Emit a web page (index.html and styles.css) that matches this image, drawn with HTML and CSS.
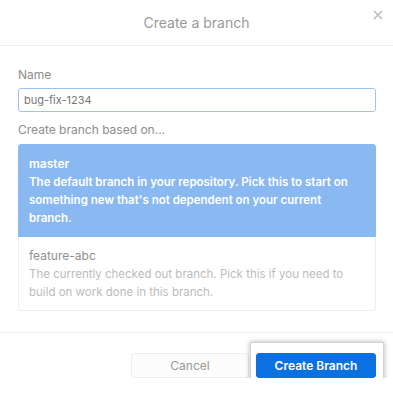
FILE: index.html
```html
<!DOCTYPE html>
<html lang="en">
<head>
  <meta charset="UTF-8">
  <meta name="viewport" content="width=device-width, initial-scale=1.0">
  <title>Create a branch</title>
  <link rel="stylesheet" href="styles.css">
</head>
<body>
  <div class="dialog">
    <header class="dialog-header">
      <h1>Create a branch</h1>
      <button class="close" aria-label="Close">
        <svg width="10" height="10" viewBox="0 0 10 10">
          <path d="M1 1L9 9M9 1L1 9" stroke="#b9bcc0" stroke-width="1.6" fill="none"/>
        </svg>
      </button>
    </header>

    <div class="dialog-body">
      <label class="field-label" for="branch-name">Name</label>
      <input class="text-input" id="branch-name" type="text" value="bug-fix-1234">

      <p class="field-label">Create branch based on...</p>
      <ul class="branch-list">
        <li class="branch selected">
          <div class="branch-name">master</div>
          <div class="branch-desc">The default branch in your repository. Pick this to start on something new that's not dependent on your current branch.</div>
        </li>
        <li class="branch">
          <div class="branch-name">feature-abc</div>
          <div class="branch-desc">The currently checked out branch. Pick this if you need to build on work done in this branch.</div>
        </li>
      </ul>
    </div>

    <footer class="dialog-footer">
      <button class="btn">Cancel</button>
      <div class="highlight">
        <button class="btn btn-primary">Create Branch</button>
      </div>
    </footer>
  </div>
</body>
</html>
```

FILE: styles.css
```css
body {
  margin: 0;
  background: #fff;
  font-family: Inter, "Noto Sans", sans-serif;
  color: #888;
}
.dialog {
  width: 393px;
}
.dialog-header {
  position: relative;
  height: 45px;
  border-bottom: 1px solid #ececec;
  display: flex;
  align-items: center;
  justify-content: center;
}
.dialog-header h1 {
  margin: 0;
  font-size: 14px;
  font-weight: 400;
  color: #999;
}
.close {
  position: absolute;
  top: 10px;
  right: 10px;
  border: none;
  background: none;
  padding: 0;
  width: 10px;
  height: 10px;
}
.close svg {
  display: block;
}
.dialog-body {
  padding: 21px 17px 0 18px;
}
.field-label {
  display: block;
  margin: 0;
  font-size: 12px;
  line-height: 16px;
  color: #8d8d8d;
}
.text-input {
  display: block;
  box-sizing: border-box;
  width: 100%;
  height: 24px;
  margin: 5px 0 10px;
  padding: 0 5px;
  border: 1px solid #9ec3f2;
  border-radius: 3px;
  font-family: inherit;
  font-size: 11px;
  color: #777;
  outline: none;
}
.branch-list {
  list-style: none;
  margin: 6px 0 0;
  padding: 0;
}
.branch {
  padding: 10px 10px 9px;
  border: 1px solid #eee;
  border-radius: 3px;
  font-size: 12px;
  line-height: 18px;
}
.branch .branch-name {
  color: #909090;
}
.branch .branch-desc {
  font-size: 11.5px;
  color: #bcbcbc;
}
.branch.selected {
  background: #8ab8f0;
  border-color: #8ab8f0;
  border-radius: 3px 3px 0 0;
}
.branch.selected .branch-name,
.branch.selected .branch-desc {
  color: #fff;
  font-weight: 600;
}
.branch + .branch {
  border-top: none;
  border-radius: 0 0 3px 3px;
}
.dialog-footer {
  margin-top: 21px;
  border-top: 1px solid #ececec;
  padding: 20px 17px 0 18px;
  display: flex;
  align-items: flex-start;
  justify-content: flex-end;
  gap: 1px;
}
.btn {
  width: 118px;
  height: 25px;
  border: 1px solid #eee;
  border-radius: 3px;
  background: #fcfcfc;
  font-family: inherit;
  font-size: 12px;
  color: #999;
}
.btn-primary {
  display: block;
  width: 120px;
  background: #0b70e0;
  border-color: #0b70e0;
  color: #fff;
  font-weight: 600;
}
.highlight {
  margin: -11px -8px -10px 0;
  padding: 10px 7px 9px 5px;
  background: #fff;
  border: 1px solid #d4d4d4;
  box-shadow: 0 0 5px rgba(0, 0, 0, 0.3);
}
```
